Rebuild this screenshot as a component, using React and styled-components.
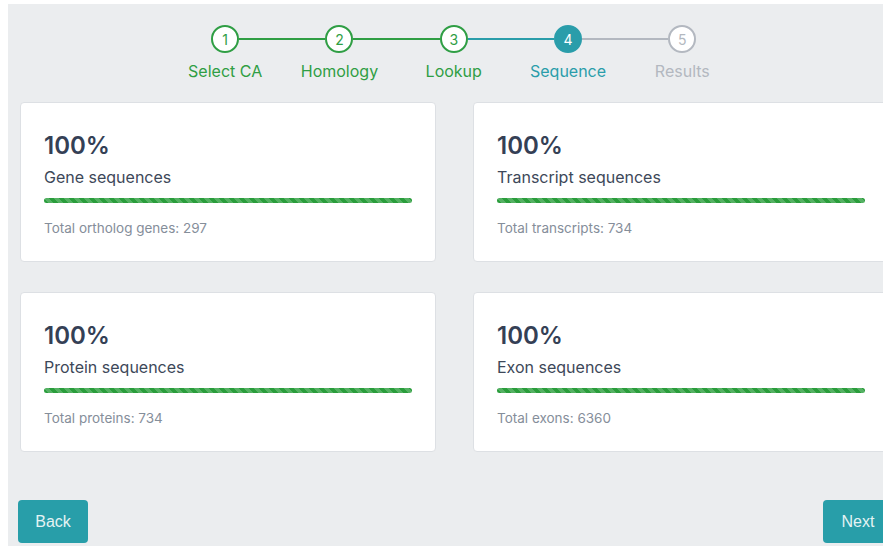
import React from 'react'
import styled, { createGlobalStyle } from 'styled-components'

const GlobalStyle = createGlobalStyle`
body {
  margin: 4px 0 0 8px;
  background: #ffffff;
  overflow: hidden;
  font-family: Inter, "Liberation Sans", sans-serif;
}
`

const GREEN = '#2f9e44'
const TEAL = '#2a9daa'
const GREY = '#b3b8c0'

const stateColor = (state) =>
  state === 'done' ? GREEN : state === 'active' ? TEAL : GREY

const Panel = styled.div`
width: 900px;
min-height: 560px;
background: #ebedef;
`

const Stepper = styled.div`
display: flex;
padding: 21px 0 0 160px;
`

const Step = styled.div`
width: 114.3px;
display: flex;
flex-direction: column;
align-items: center;
`

const Track = styled.div`
width: 100%;
display: flex;
align-items: center;
`

const Line = styled.div`
flex: 1;
height: 2px;
background: ${(p) => p.color || 'transparent'};
`

const Circle = styled.div`
width: 24px;
height: 24px;
border-radius: 50%;
border: 2px solid ${(p) => stateColor(p.state)};
background: ${(p) => (p.state === 'active' ? TEAL : '#ffffff')};
color: ${(p) => (p.state === 'active' ? '#ffffff' : stateColor(p.state))};
display: flex;
align-items: center;
justify-content: center;
font-size: 14px;
`

const StepLabel = styled.div`
margin-top: 8px;
font-size: 16px;
line-height: 20px;
white-space: nowrap;
color: ${(p) => stateColor(p.state)};
`

const Grid = styled.div`
display: grid;
grid-template-columns: 416px 416px;
column-gap: 37px;
row-gap: 30px;
padding: 21px 12px 0 12px;
`

const Card = styled.div`
height: 160px;
box-sizing: border-box;
background: #ffffff;
border: 1px solid #dde0e4;
border-radius: 4px;
padding: 28px 23px 0 23px;
`

const Percent = styled.div`
font-size: 24px;
line-height: 30px;
font-weight: 600;
color: #344055;
`

const Title = styled.div`
margin-top: 6px;
font-size: 16px;
line-height: 20px;
color: #3d4859;
`

const Bar = styled.div`
margin-top: 11px;
height: 5px;
border-radius: 3px;
background-color: #2a9d3c;
background-image: linear-gradient(
  45deg,
  rgba(255, 255, 255, 0.2) 25%,
  transparent 25%,
  transparent 50%,
  rgba(255, 255, 255, 0.2) 50%,
  rgba(255, 255, 255, 0.2) 75%,
  transparent 75%,
  transparent
);
background-size: 10px 10px;
`

const Total = styled.div`
margin-top: 16px;
font-size: 13.5px;
line-height: 18px;
color: #858e9a;
`

const Footer = styled.div`
display: flex;
justify-content: space-between;
padding: 48px 15px 0 10px;
`

const Button = styled.button`
height: 43px;
width: 70px;
border: none;
border-radius: 4px;
background: #289ea9;
color: #e4f3f4;
font-family: "Liberation Sans", Arial, sans-serif;
font-size: 16px;
cursor: pointer;
`

const steps = [
  { n: 1, label: 'Select CA', state: 'done' },
  { n: 2, label: 'Homology', state: 'done' },
  { n: 3, label: 'Lookup', state: 'done' },
  { n: 4, label: 'Sequence', state: 'active' },
  { n: 5, label: 'Results', state: 'todo' },
]

// colour of the connector between step i and step i+1
const linkColor = (i) => {
  if (i < 0 || i >= steps.length - 1) return null
  const next = steps[i + 1].state
  return next === 'done' ? GREEN : next === 'active' ? TEAL : GREY
}

const cards = [
  { title: 'Gene sequences', total: 'Total ortholog genes: 297' },
  { title: 'Transcript sequences', total: 'Total transcripts: 734' },
  { title: 'Protein sequences', total: 'Total proteins: 734' },
  { title: 'Exon sequences', total: 'Total exons: 6360' },
]

function App() {
  return (
    <>
      <GlobalStyle />
      <Panel>
        <Stepper>
          {steps.map((s, i) => (
            <Step key={s.n}>
              <Track>
                <Line color={linkColor(i - 1)} />
                <Circle state={s.state}>{s.n}</Circle>
                <Line color={linkColor(i)} />
              </Track>
              <StepLabel state={s.state}>{s.label}</StepLabel>
            </Step>
          ))}
        </Stepper>

        <Grid>
          {cards.map((c) => (
            <Card key={c.title}>
              <Percent>100%</Percent>
              <Title>{c.title}</Title>
              <Bar />
              <Total>{c.total}</Total>
            </Card>
          ))}
        </Grid>

        <Footer>
          <Button>Back</Button>
          <Button>Next</Button>
        </Footer>
      </Panel>
    </>
  )
}

export default App
